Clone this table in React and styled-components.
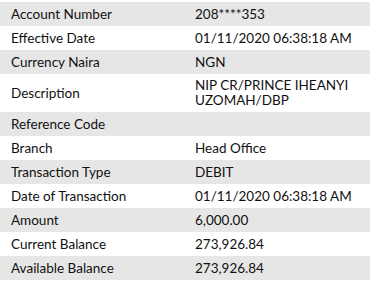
import React from 'react';
import styled, { createGlobalStyle } from 'styled-components';

const GlobalStyle = createGlobalStyle`
  html, body {
    margin: 0;
    padding: 0;
    background: #ffffff;
  }
  body {
    font-family: 'Lato', 'Liberation Sans', sans-serif;
    color: #111111;
  }
`;

const Table = styled.div`
  width: 370px;
  padding-top: 2px;
  display: flex;
  flex-direction: column;
`;

const Row = styled.div`
  display: grid;
  grid-template-columns: 185px 1fr;
  min-height: ${(p) => (p.$tall ? 38 : 24)}px;
  background: ${(p) => (p.$shaded ? '#e6e6e6' : '#ffffff')};
`;

const Cell = styled.div`
  display: flex;
  align-items: center;
  padding: 0 10px 0 11px;
  font-size: 13.5px;
  line-height: 15px;
`;

const ValueCell = styled(Cell)`
  padding-left: 10px;
`;

const rows = [
  ['Account Number', '208****353'],
  ['Effective Date', '01/11/2020 06:38:18 AM'],
  ['Currency Naira', 'NGN'],
  ['Description', 'NIP CR/PRINCE IHEANYI UZOMAH/DBP', true],
  ['Reference Code', ''],
  ['Branch', 'Head Office'],
  ['Transaction Type', 'DEBIT'],
  ['Date of Transaction', '01/11/2020 06:38:18 AM'],
  ['Amount', '6,000.00'],
  ['Current Balance', '273,926.84'],
  ['Available Balance', '273,926.84'],
];

export default function App() {
  return (
    <>
      <GlobalStyle />
      <Table>
        {rows.map(([label, value, tall], i) => (
          <Row key={label} $shaded={i % 2 === 0} $tall={tall}>
            <Cell>{label}</Cell>
            <ValueCell>{value}</ValueCell>
          </Row>
        ))}
      </Table>
    </>
  );
}
